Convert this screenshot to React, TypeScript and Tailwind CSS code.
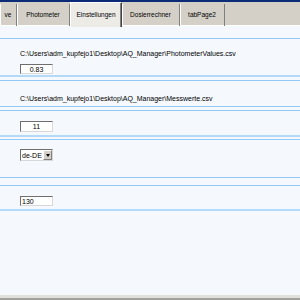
import React from "react";

const font = { fontFamily: '"Liberation Sans", Arial, sans-serif' };

function Tab({ label, width, active }: { label: string; width: string; active?: boolean }) {
  if (active) {
    return (
      <div
        className={`${width} h-[25px] -mb-px flex items-center justify-center bg-[#ecebe6] border-l border-t border-white border-r border-r-[#404040] shadow-[inset_-1px_0_0_#808080] text-[6.5px] text-black z-10`}
      >
        {label}
      </div>
    );
  }
  return (
    <div
      className={`${width} h-[22px] mt-[2px] flex items-center justify-center border-r border-r-[#808080] shadow-[inset_1px_0_0_#ffffff] text-[6.5px] text-black`}
    >
      {label}
    </div>
  );
}

function Box({ value, align = "center" }: { value: string; align?: "center" | "left" }) {
  return (
    <div
      className={`w-[33px] h-[10px] bg-white border-t border-l border-[#6e6e6e] border-b border-r border-b-[#d8d8d8] border-r-[#d8d8d8] flex items-center text-[7px] leading-none text-black ${
        align === "center" ? "justify-center" : "justify-start pl-[1px]"
      }`}
    >
      {value}
    </div>
  );
}

export default function App() {
  return (
    <div className="w-[300px] h-[300px] flex flex-col overflow-hidden bg-[#f5f9fe]" style={font}>
      <div className="h-[2px] bg-[#0b2a78]" />
      <div className="h-[24px] flex items-start bg-[#d4d0c8] border-b border-white">
        <Tab label="ve" width="w-[17px]" />
        <Tab label="Photometer" width="w-[53px]" />
        <Tab label="Einstellungen" width="w-[52px]" active />
        <Tab label="Dosierrechner" width="w-[58px]" />
        <Tab label="tabPage2" width="w-[45px]" />
        <div className="flex-1" />
      </div>

      <div className="flex-1 flex flex-col pt-[12px]">
        {/* Photometer values path */}
        <div className="h-[39px] border-t border-[#92c9f6] border-b-2 border-b-[#b3dafa] pl-[20px] pt-[11px] flex flex-col gap-[6px]">
          <div className="text-[7px] leading-[8px] text-black">
            C:\Users\adm_kupfejo1\Desktop\AQ_Manager\PhotometerValues.csv
          </div>
          <Box value="0.83" />
        </div>

        {/* Messwerte path */}
        <div className="mt-[3px] h-[27px] border-t border-b border-[#92c9f6] pl-[20px] pt-[14px]">
          <div className="text-[7px] leading-[8px] text-black">
            C:\Users\adm_kupfejo1\Desktop\AQ_Manager\Messwerte.csv
          </div>
        </div>

        <div className="mt-[3px] h-[27px] border-t border-[#92c9f6] border-b-2 border-b-[#b3dafa] pl-[20px] pt-[10px]">
          <div className="w-[33px] h-[11px] bg-white border-t border-l border-[#6e6e6e] border-b border-r border-b-[#d8d8d8] border-r-[#d8d8d8] flex items-center justify-center text-[7px] leading-none text-black">
            11
          </div>
        </div>

        {/* Culture */}
        <div className="mt-[2px] h-[39px] border-t border-b border-[#92c9f6] pl-[20px] pt-[9px]">
          <div className="w-[33px] h-[12px] bg-white border-t border-l border-[#6e6e6e] border-b border-r border-b-[#d8d8d8] border-r-[#d8d8d8] flex items-center">
            <span className="flex-1 pl-[1px] text-[7px] leading-none text-black">de-DE</span>
            <div className="w-[9px] h-full bg-[#d4d0c8] border-l border-t border-white border-r border-b border-r-[#808080] border-b-[#808080] flex items-center justify-center">
              <div className="w-0 h-0 border-l-[2.5px] border-r-[2.5px] border-t-[3px] border-l-transparent border-r-transparent border-t-black" />
            </div>
          </div>
        </div>

        <div className="mt-[7px] h-[26px] border-t border-[#92c9f6] border-b-2 border-b-[#b3dafa] pl-[20px] pt-[10px]">
          <Box value="130" align="left" />
        </div>

        <div className="flex-1" />
      </div>

      <div className="h-[3px] bg-[#e2e0da]" />
      <div className="h-[2px] bg-[#a3a19b]" />
    </div>
  );
}
